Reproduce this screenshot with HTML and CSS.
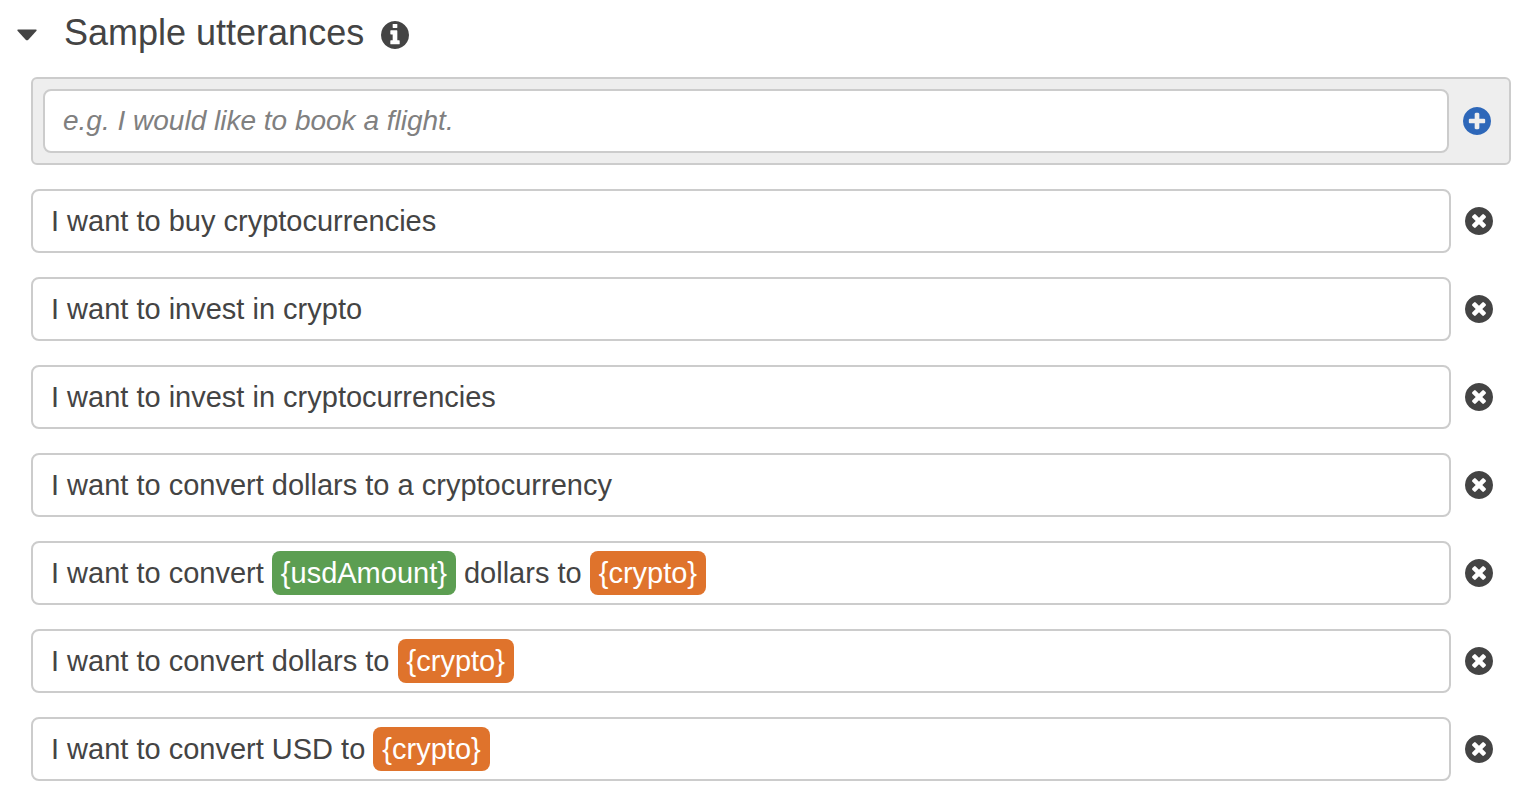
FILE: index.html
```html
<!DOCTYPE html>
<html lang="en">
<head>
<meta charset="utf-8">
<meta name="viewport" content="width=device-width, initial-scale=1">
<title>Sample utterances</title>
<link rel="stylesheet" href="styles.css">
</head>
<body>
<svg class="sprite" aria-hidden="true">
  <symbol id="icon-info" viewBox="128 128 1536 1536"><path d="M1152 1376v-160q0-14-9-23t-23-9h-96v-512q0-14-9-23t-23-9h-320q-14 0-23 9t-9 23v160q0 14 9 23t23 9h96v320h-96q-14 0-23 9t-9 23v160q0 14 9 23t23 9h448q14 0 23-9t9-23zm-128-896v-160q0-14-9-23t-23-9h-192q-14 0-23 9t-9 23v160q0 14 9 23t23 9h192q14 0 23-9t9-23zm640 416q0 209-103 385.5t-279.5 279.5-385.5 103-385.5-103-279.5-279.5-103-385.5 103-385.5 279.5-279.5 385.5-103 385.5 103 279.5 279.5 103 385.5z"/></symbol>
  <symbol id="icon-plus" viewBox="128 128 1536 1536"><path d="M1344 960v-128q0-26-19-45t-45-19h-256v-256q0-26-19-45t-45-19h-128q-26 0-45 19t-19 45v256h-256q-26 0-45 19t-19 45v128q0 26 19 45t45 19h256v256q0 26 19 45t45 19h128q26 0 45-19t19-45v-256h256q26 0 45-19t19-45zm320-64q0 209-103 385.5t-279.5 279.5-385.5 103-385.5-103-279.5-279.5-103-385.5 103-385.5 279.5-279.5 385.5-103 385.5 103 279.5 279.5 103 385.5z"/></symbol>
  <symbol id="icon-remove" viewBox="128 128 1536 1536"><path d="M1277 1122q0-26-19-45l-181-181 181-181q19-19 19-45 0-27-19-46l-90-90q-19-19-46-19-26 0-45 19l-181 181-181-181q-19-19-45-19-27 0-46 19l-90 90q-19 19-19 46 0 26 19 45l181 181-181 181q-19 19-19 45 0 27 19 46l90 90q19 19 46 19 26 0 45-19l181-181 181 181q19 19 45 19 27 0 46-19l90-90q19-19 19-46zm387-226q0 209-103 385.5t-279.5 279.5-385.5 103-385.5-103-279.5-279.5-103-385.5 103-385.5 279.5-279.5 385.5-103 385.5 103 279.5 279.5 103 385.5z"/></symbol>
</svg>
<main class="panel">
  <header class="panel-header">
    <button class="toggle" type="button" aria-expanded="true" aria-controls="utterances" aria-label="Collapse section">
      <svg class="caret" viewBox="0 0 20 12" aria-hidden="true"><path d="M1 0.5h18q1.2 0.6 0.3 1.6l-8 8.6q-1.3 1-2.6 0l-8-8.6q-0.9-1 0.3-1.6z"/></svg>
    </button>
    <h1 class="title">Sample utterances</h1>
    <button class="icon-button" type="button" aria-label="About sample utterances"><svg class="icon"><use href="#icon-info"/></svg></button>
  </header>
  <section class="utterances" id="utterances">
    <form class="row add-row">
      <input class="field" type="text" aria-label="New utterance" placeholder="e.g. I would like to book a flight.">
      <button class="icon-button add" type="button" aria-label="Add utterance"><svg class="icon"><use href="#icon-plus"/></svg></button>
    </form>
    <div class="row">
      <input class="field" type="text" aria-label="Utterance 1" value="I want to buy cryptocurrencies">
      <button class="icon-button" type="button" aria-label="Remove utterance 1"><svg class="icon"><use href="#icon-remove"/></svg></button>
    </div>
    <div class="row">
      <input class="field" type="text" aria-label="Utterance 2" value="I want to invest in crypto">
      <button class="icon-button" type="button" aria-label="Remove utterance 2"><svg class="icon"><use href="#icon-remove"/></svg></button>
    </div>
    <div class="row">
      <input class="field" type="text" aria-label="Utterance 3" value="I want to invest in cryptocurrencies">
      <button class="icon-button" type="button" aria-label="Remove utterance 3"><svg class="icon"><use href="#icon-remove"/></svg></button>
    </div>
    <div class="row">
      <input class="field" type="text" aria-label="Utterance 4" value="I want to convert dollars to a cryptocurrency">
      <button class="icon-button" type="button" aria-label="Remove utterance 4"><svg class="icon"><use href="#icon-remove"/></svg></button>
    </div>
    <div class="row">
      <div class="field" role="textbox" contenteditable="true" spellcheck="false" aria-label="Utterance 5">I want to convert <span class="slot slot-green">{usdAmount}</span> dollars to <span class="slot slot-orange">{crypto}</span></div>
      <button class="icon-button" type="button" aria-label="Remove utterance 5"><svg class="icon"><use href="#icon-remove"/></svg></button>
    </div>
    <div class="row">
      <div class="field" role="textbox" contenteditable="true" spellcheck="false" aria-label="Utterance 6">I want to convert dollars to <span class="slot slot-orange">{crypto}</span></div>
      <button class="icon-button" type="button" aria-label="Remove utterance 6"><svg class="icon"><use href="#icon-remove"/></svg></button>
    </div>
    <div class="row">
      <div class="field" role="textbox" contenteditable="true" spellcheck="false" aria-label="Utterance 7">I want to convert USD to <span class="slot slot-orange">{crypto}</span></div>
      <button class="icon-button" type="button" aria-label="Remove utterance 7"><svg class="icon"><use href="#icon-remove"/></svg></button>
    </div>
  </section>
</main>
</body>
</html>
```

FILE: styles.css
```css
*,
*::before,
*::after {
  box-sizing: border-box;
}

body {
  margin: 0;
  background: #fff;
  color: #444;
  font-family: "Helvetica Neue", Helvetica, "Liberation Sans", Arial, sans-serif;
  font-size: 29px;
  line-height: 44px;
}

.sprite {
  position: absolute;
  width: 0;
  height: 0;
}

.panel {
  padding: 13px 27px 30px 17px;
}

.panel-header {
  display: flex;
  align-items: center;
}

.toggle,
.icon-button {
  display: flex;
  flex: none;
  padding: 0;
  border: 0;
  background: none;
  color: #444;
  cursor: pointer;
}

.caret {
  width: 20px;
  height: 12px;
  fill: currentColor;
}

.title {
  margin: 0 17px 0 27px;
  padding-bottom: 4px;
  font-size: 36px;
  font-weight: 400;
  line-height: 40px;
}

.icon {
  width: 28px;
  height: 28px;
  fill: currentColor;
}

.utterances {
  display: flex;
  flex-direction: column;
  gap: 24px;
  margin: 20px 0 0 14px;
}

.row {
  display: flex;
  align-items: center;
  gap: 14px;
  padding-right: 18px;
}

.add-row {
  padding: 10px 18px 10px 10px;
  border: 2px solid #ccc;
  border-radius: 6px;
  background: #eee;
}

.field {
  flex: 1;
  min-width: 0;
  min-height: 64px;
  padding: 8px 18px;
  border: 2px solid #ccc;
  border-radius: 8px;
  background: #fff;
  color: #444;
  font: inherit;
}

.add-row .field {
  font-size: 28px;
}

.field::placeholder {
  color: #808080;
  font-style: italic;
  opacity: 1;
}

.slot {
  display: inline-block;
  padding: 0 9px;
  border-radius: 8px;
  color: #fff;
}

.slot-green {
  background: #5c9e52;
}

.slot-orange {
  background: #df732c;
}

.icon-button.add {
  color: #2d67b9;
}
```
